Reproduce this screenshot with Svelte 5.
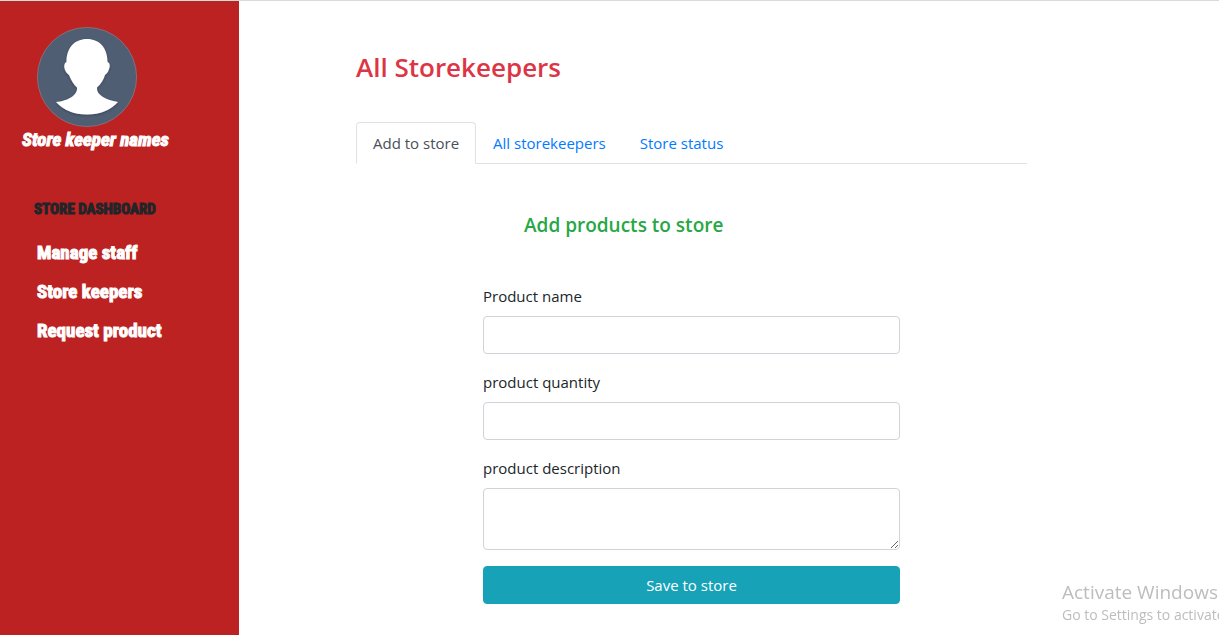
<script>
  const links = ['Manage staff', 'Store keepers', 'Request product'];
  const tabs = ['Add to store', 'All storekeepers', 'Store status'];
  let active = $state(0);
</script>

<div class="page">
  <aside class="sidebar">
    <div class="profile">
      <svg class="avatar" viewBox="0 0 100 100" role="img" aria-label="Profile picture">
        <defs>
          <filter id="shade" x="-10%" y="-10%" width="120%" height="120%">
            <feDropShadow dx="0" dy="1" stdDeviation="1" flood-color="#1f2937" flood-opacity="0.5" />
          </filter>
        </defs>
        <circle cx="50" cy="50" r="49.6" fill="#505e73" stroke="#8d7680" stroke-width="0.8" />
        <path
          filter="url(#shade)"
          fill="#fff"
          d="M50 12C37.500 12 29.500 21 29.500 35C27 36 26.700 40 28.300 43.500C29 46 31 47 32 48C34 53 37 58 40 60.500C41 68 31 74 19 75C26 83 37 87.500 50 87.500C63 87.500 74 83 81 75C69 73 59 68 60 60.500C64 57 66.500 53 68 48C69.500 47 71 45 71.700 43C73.500 39 73 36 70.500 35C70.500 21 62.500 12 50 12Z"
        />
      </svg>
      <p class="name">Store keeper names</p>
    </div>
    <h2 class="title">STORE DASHBOARD</h2>
    <nav class="menu" aria-label="Store">
      {#each links as link}
        <a href="#top">{link}</a>
      {/each}
    </nav>
  </aside>

  <main class="main">
    <h1>All Storekeepers</h1>
    <div class="tabs" role="tablist">
      {#each tabs as tab, i}
        <button type="button" role="tab" class="tab" class:active={active === i} aria-selected={active === i} onclick={() => (active = i)}>{tab}</button>
      {/each}
    </div>
    <form class="form" onsubmit={(e) => e.preventDefault()}>
      <h2>Add products to store</h2>
      <div class="field">
        <label for="name">Product name</label>
        <input id="name" type="text" />
      </div>
      <div class="field">
        <label for="quantity">product quantity</label>
        <input id="quantity" type="text" />
      </div>
      <div class="field">
        <label for="description">product description</label>
        <textarea id="description" rows="2"></textarea>
      </div>
      <button class="save" type="submit">Save to store</button>
    </form>
  </main>

  <div class="notice">
    <p class="notice-title">Activate Windows</p>
    <p>Go to Settings to activate Windows.</p>
  </div>
</div>

<style>
  :global(body) {
    margin: 0;
    background: #fff;
  }
  .page, .page * {
    box-sizing: border-box;
  }
  .page {
    display: flex;
    min-height: 100vh;
    border-top: 1px solid #dadada;
    color: #212529;
    font-family: "Segoe UI", "Open Sans", "Noto Sans", sans-serif;
    font-size: 15px;
    line-height: 24px;
  }
  h1, h2, p {
    margin: 0;
  }
  .sidebar {
    flex: 0 0 239px;
    padding: 26px 20px;
    background: #bd2222;
    font-family: Impact, "Roboto Condensed", "Liberation Sans Narrow", sans-serif;
    font-weight: 700;
  }
  .profile {
    display: flex;
    flex-direction: column;
    align-items: flex-start;
  }
  .avatar {
    width: 100px;
    height: 100px;
    margin-left: 17px;
  }
  .name {
    padding-left: 2px;
    color: #fff;
    font-size: 19px;
    line-height: 26px;
    font-style: italic;
    -webkit-text-stroke: 1px #fff;
  }
  .title {
    margin-top: 44px;
    padding-left: 14px;
    font-size: 15px;
    line-height: 24px;
    -webkit-text-stroke: 1px #212529;
  }
  .menu {
    display: flex;
    flex-direction: column;
    gap: 15px;
    margin-top: 20px;
    padding-left: 17px;
  }
  .menu a {
    color: #fff;
    font-size: 19px;
    text-decoration: none;
    -webkit-text-stroke: 1px #fff;
  }
  .main {
    flex: 1;
    min-width: 0;
    padding: 49px 192px 31px 117px;
  }
  h1 {
    color: #dc3545;
    font-size: 26px;
    font-weight: 600;
    line-height: 34px;
  }
  .tabs {
    display: flex;
    margin-top: 38px;
    border-bottom: 1px solid #dee2e6;
  }
  .tab {
    margin-bottom: -1px;
    padding: 8px 16px;
    border: 1px solid transparent;
    border-radius: 4px 4px 0 0;
    background: transparent;
    color: #007bff;
    font: inherit;
    cursor: pointer;
  }
  .tab.active {
    border-color: #dee2e6 #dee2e6 #fff;
    background: #fff;
    color: #495057;
  }
  .form {
    display: flex;
    flex-direction: column;
    gap: 16px;
    width: 100%;
    max-width: 417px;
    margin: 49px auto 0;
  }
  .form h2 {
    margin-bottom: 31px;
    padding-left: 41px;
    color: #28a745;
    font-size: 19px;
    font-weight: 600;
    line-height: 24px;
  }
  .field {
    display: flex;
    flex-direction: column;
    gap: 8px;
  }
  input, textarea {
    width: 100%;
    padding: 6px 12px;
    border: 1px solid #ced4da;
    border-radius: 4px;
    background: #fff;
    color: #495057;
    font: inherit;
  }
  input {
    height: 38px;
  }
  textarea {
    height: 62px;
    resize: vertical;
  }
  .save {
    padding: 6px 12px;
    border: 1px solid #17a2b8;
    border-radius: 4px;
    background: #17a2b8;
    color: #fff;
    font: inherit;
    cursor: pointer;
  }
  .notice {
    position: fixed;
    right: 0;
    bottom: 9px;
    width: 157px;
    overflow: hidden;
    color: #bdbdbd;
    font-size: 14px;
    line-height: 22px;
    white-space: nowrap;
    pointer-events: none;
  }
  .notice-title {
    font-size: 19px;
    line-height: 24px;
  }
</style>
